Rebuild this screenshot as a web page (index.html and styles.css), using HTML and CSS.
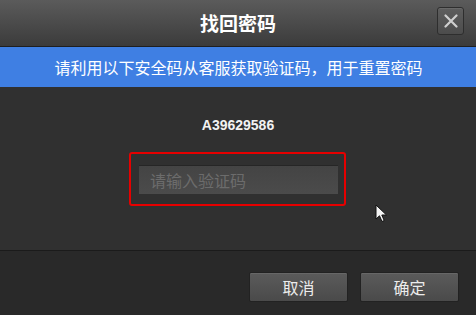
FILE: index.html
```html
<!DOCTYPE html>
<html lang="zh-CN">
<head>
<meta charset="utf-8">
<title>找回密码</title>
<link rel="stylesheet" href="styles.css">
</head>
<body>
<div class="dialog">
  <header class="titlebar">
    <h1 class="title">找回密码</h1>
    <button class="close" aria-label="关闭">
      <svg width="14" height="14" viewBox="0 0 14 14"><path d="M1.5 1.5 L12.5 12.5 M12.5 1.5 L1.5 12.5" stroke="#cfcfcf" stroke-width="2.2" stroke-linecap="round"/></svg>
    </button>
  </header>
  <div class="notice">请利用以下安全码从客服获取验证码，用于重置密码</div>
  <main class="content">
    <div class="code">A39629586</div>
    <div class="field-wrap">
      <input class="field" type="text" placeholder="请输入验证码">
    </div>
    <svg class="pointer" width="14" height="20" viewBox="0 0 14 20"><path d="M1 1 L1 15 L4.5 11.8 L7 17.5 L9.2 16.5 L6.8 11 L11.5 11 Z" fill="#f4f4f4" stroke="#111" stroke-width="1"/></svg>
  </main>
  <footer class="footer">
    <button class="btn">取消</button>
    <button class="btn">确定</button>
  </footer>
</div>
</body>
</html>
```
FILE: styles.css
```css
* { box-sizing: border-box; }
html, body { margin: 0; padding: 0; }
body {
  width: 476px;
  height: 315px;
  overflow: hidden;
  background: #303030;
  font-family: "Noto Sans CJK SC", "Noto Sans", sans-serif;
}
.dialog {
  display: flex;
  flex-direction: column;
  height: 315px;
}
.titlebar {
  position: relative;
  height: 47px;
  display: flex;
  align-items: center;
  justify-content: center;
  background: linear-gradient(#5b5b5b, #3b3b3b);
  border-bottom: 1px solid #1f1f1f;
}
.title {
  margin: 0;
  font-size: 19px;
  font-weight: bold;
  color: #ffffff;
  line-height: 1;
  padding-bottom: 2px;
}
.close {
  position: absolute;
  left: 437px;
  top: 7px;
  width: 27px;
  height: 28px;
  padding: 0;
  border: 1px solid #2e2e2e;
  border-radius: 3px;
  background: linear-gradient(#5e5e5e, #4c4c4c);
  box-shadow: inset 0 1px 0 rgba(255,255,255,0.08);
  display: flex;
  align-items: center;
  justify-content: center;
}
.notice {
  height: 40px;
  background: #3f7fe3;
  color: #ffffff;
  font-size: 16px;
  display: flex;
  align-items: center;
  justify-content: center;
  padding-left: 1px;
}
.content {
  position: relative;
  height: 163px;
  background: #303030;
  display: flex;
  flex-direction: column;
  align-items: center;
  padding-top: 30px;
}
.code {
  font-family: "Liberation Sans", Arial, sans-serif;
  font-weight: bold;
  font-size: 14px;
  color: #f2f2f2;
  line-height: 16px;
  height: 16px;
}
.field-wrap {
  margin-top: 19px;
  width: 217px;
  height: 54px;
  border: 2px solid #e60000;
  border-radius: 3px;
  padding: 11px 6px 10px 8px;
  margin-left: -1px;
}
.field {
  display: block;
  width: 199px;
  height: 29px;
  margin: 0;
  border: none;
  border-top: 1px solid #262626;
  background: linear-gradient(#444444, #4b4b4b);
  font-family: "Noto Sans CJK SC", sans-serif;
  font-size: 16px;
  color: #ddd;
  padding: 0 0 0 11px;
  outline: none;
}
.field::placeholder { color: #6c6c6c; }
.pointer {
  position: absolute;
  left: 375px;
  top: 117px;
}
.footer {
  flex: 1;
  background: #292929;
  border-top: 1px solid #1b1b1b;
  display: flex;
  justify-content: flex-end;
  align-items: flex-start;
  gap: 12px;
  padding: 21px 17px 0 0;
}
.btn {
  width: 99px;
  height: 30px;
  margin: 0;
  padding: 0;
  border: 1px solid #222;
  border-radius: 2px;
  background: linear-gradient(#5b5b5b, #4a4a4a);
  box-shadow: inset 0 1px 0 rgba(255,255,255,0.08);
  color: #ececec;
  font-family: "Noto Sans CJK SC", sans-serif;
  font-size: 16px;
  line-height: 1;
}
```
